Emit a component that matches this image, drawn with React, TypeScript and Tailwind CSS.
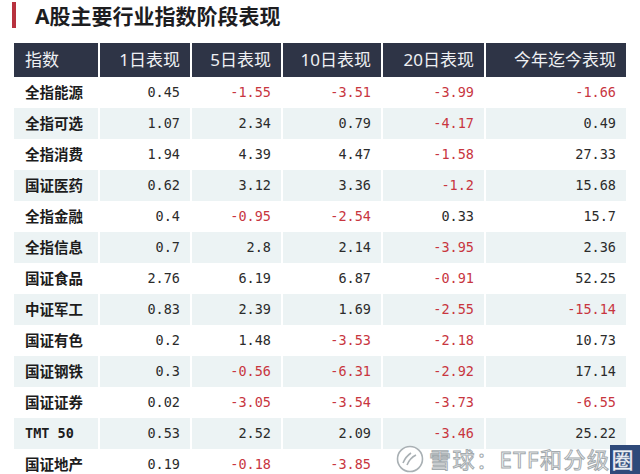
import React from 'react';

type Row = { name: string; values: string[]; mono?: boolean };

const rows: Row[] = [
    { name: '全指能源', values: ['0.45', '-1.55', '-3.51', '-3.99', '-1.66'] },
    { name: '全指可选', values: ['1.07', '2.34', '0.79', '-4.17', '0.49'] },
    { name: '全指消费', values: ['1.94', '4.39', '4.47', '-1.58', '27.33'] },
    { name: '国证医药', values: ['0.62', '3.12', '3.36', '-1.2', '15.68'] },
    { name: '全指金融', values: ['0.4', '-0.95', '-2.54', '0.33', '15.7'] },
    { name: '全指信息', values: ['0.7', '2.8', '2.14', '-3.95', '2.36'] },
    { name: '国证食品', values: ['2.76', '6.19', '6.87', '-0.91', '52.25'] },
    { name: '中证军工', values: ['0.83', '2.39', '1.69', '-2.55', '-15.14'] },
    { name: '国证有色', values: ['0.2', '1.48', '-3.53', '-2.18', '10.73'] },
    { name: '国证钢铁', values: ['0.3', '-0.56', '-6.31', '-2.92', '17.14'] },
    { name: '国证证券', values: ['0.02', '-3.05', '-3.54', '-3.73', '-6.55'] },
    { name: 'TMT 50', values: ['0.53', '2.52', '2.09', '-3.46', '25.22'], mono: true },
    { name: '国证地产', values: ['0.19', '-0.18', '-3.85', '', ''] },
];

const headers = ['指数', '1日表现', '5日表现', '10日表现', '20日表现', '今年迄今表现'];

const cjk = "font-['Noto_Sans','Noto_Sans_CJK_SC',sans-serif]";
const mono = "font-['DejaVu_Sans_Mono',monospace]";

function Watermark() {
    return (
        <div className="absolute left-[395px] top-[444px] flex items-center whitespace-nowrap">
            <svg width="30" height="30" viewBox="0 0 30 30" className="mr-[4px] shrink-0">
                <circle cx="15" cy="15" r="12.5" fill="white" stroke="#a9b0b4" strokeWidth="1.6" />
                <path d="M8 19 C10 14 13 11 16 9" fill="none" stroke="#a9b0b4" strokeWidth="1.6" />
                <path d="M12 21 C14 16 17 13 21 11" fill="none" stroke="#a9b0b4" strokeWidth="1.6" />
            </svg>
            <span className={`${cjk} shrink-0 text-[22px] leading-none tracking-[1.5px] text-white [-webkit-text-stroke:1px_#a3aaae]`}>
                雪球：ETF和分级
            </span>
            <span className={`${cjk} shrink-0 text-[22px] leading-none text-white bg-[#2f4a7a] pl-[1px] pr-[8px] pb-[4px] pt-[3px] [-webkit-text-stroke:0.5px_#c9d2de]`}>
                圈
            </span>
        </div>
    );
}

export default function App() {
    return (
        <div className="relative w-[640px] h-[474px] overflow-hidden bg-white">
            {/* title */}
            <div className="flex items-center pt-[2px] pl-[12px]">
                <div className="w-[4px] h-[26px] bg-[#b8323e]" />
                <h1 className={`${cjk} ml-[19px] text-[21px] font-bold leading-none text-[#1d1d1f] mt-[3px]`}>
                    A股主要行业指数阶段表现
                </h1>
            </div>

            {/* table */}
            <div className="ml-[14px] mt-[15px] grid grid-cols-[84px_90px_89px_98px_101px_140px] gap-x-[2px] w-[612px]">
                {headers.map((h, i) => (
                    <div
                        key={h}
                        className={`${cjk} h-[34px] bg-[#2e3446] text-[#eef0f3] text-[17px] flex items-center px-[11px] ${i === 0 ? 'justify-start' : 'justify-end pr-[10px]'}`}
                    >
                        {h}
                    </div>
                ))}
                {rows.map((row, r) => {
                    const bg = r % 2 === 1 ? 'bg-[#ecf3f4]' : 'bg-white';
                    return (
                        <React.Fragment key={row.name}>
                            <div
                                className={`${row.mono ? mono : cjk} ${bg} h-[31px] flex items-center pl-[11px] font-bold text-[#1c1c1c] ${row.mono ? 'text-[13.5px]' : 'text-[14.5px]'}`}
                            >
                                {row.name}
                            </div>
                            {row.values.map((v, c) => (
                                <div
                                    key={c}
                                    className={`${mono} ${bg} h-[31px] flex items-center justify-end pr-[10px] text-[13.5px] ${v.startsWith('-') ? 'text-[#c8363f]' : 'text-[#2b2b2b]'}`}
                                >
                                    {v}
                                </div>
                            ))}
                        </React.Fragment>
                    );
                })}
            </div>

            <Watermark />
        </div>
    );
}
